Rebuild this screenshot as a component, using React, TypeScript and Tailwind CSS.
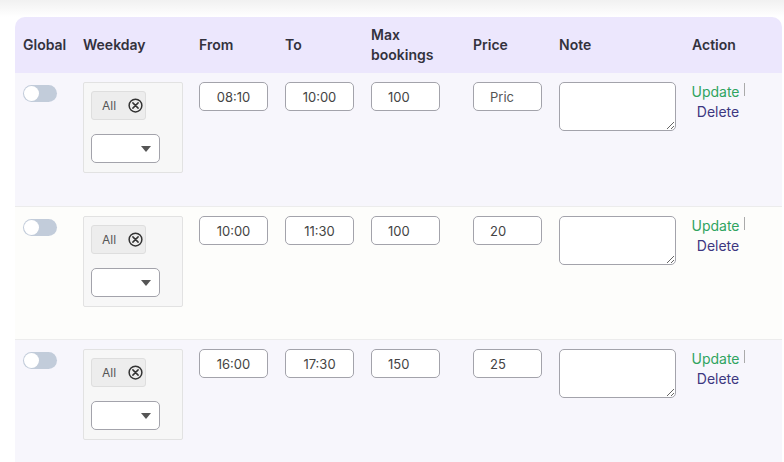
import React from 'react'

type Slot = {
  from: string
  to: string
  max: string
  price: string
}

const slots: Slot[] = [
  { from: '08:10', to: '10:00', max: '100', price: '' },
  { from: '10:00', to: '11:30', max: '100', price: '20' },
  { from: '16:00', to: '17:30', max: '150', price: '25' },
]

const cols = 'grid grid-cols-[60px_116px_86px_86px_102px_86px_133px_98px]'

function Toggle() {
  return (
    <div className="w-[34px] h-[17px] rounded-full bg-[#c2ccda] flex items-center px-[1px]">
      <div className="w-[15px] h-[15px] rounded-full bg-white" />
    </div>
  )
}

function CircleX() {
  return (
    <svg width="15" height="15" viewBox="0 0 16 16" fill="none" stroke="#333" strokeWidth="1.6">
      <circle cx="8" cy="8" r="6.8" />
      <path d="M5.2 5.2 L10.8 10.8 M10.8 5.2 L5.2 10.8" strokeLinecap="round" />
    </svg>
  )
}

function WeekdayPicker() {
  return (
    <div className="w-[100px] h-[91px] border border-[#e2e2e2] bg-[#f7f7f7] rounded-[2px] pt-[8px] pl-[7px]">
      <div className="w-[55px] h-[29px] bg-[#ededed] border border-[#dedede] rounded-[3px] flex items-center pl-[10px] gap-[12px]">
        <span className="text-[12px] text-[#555]">All</span>
        <CircleX />
      </div>
      <div className="mt-[14px] w-[69px] h-[29px] bg-white border border-[#a3a3ab] rounded-[5px] flex items-center justify-end pr-[8px]">
        <svg width="10" height="6" viewBox="0 0 10 6">
          <path d="M0 0 L10 0 L5 6 Z" fill="#555" />
        </svg>
      </div>
    </div>
  )
}

const inputCls =
  'w-[69px] h-[29px] bg-white border border-[#a3a3ab] rounded-[5px] text-[13px] text-[#444] outline-none'

export default function App() {
  return (
    <div className="w-[784px] h-[462px] overflow-hidden bg-white" style={{ fontFamily: 'Inter, "Noto Sans", sans-serif' }}>
      <div className="h-[17px] bg-gradient-to-b from-[#f1f1f1] to-white" />
      <div className="ml-[15px] w-[767px] rounded-t-[10px] overflow-hidden">
        <div className={`${cols} h-[56px] bg-[#ece7fd] items-center text-[14px] font-semibold text-[#33323d] leading-[20px]`}>
          <div className="pl-2">Global</div>
          <div className="pl-2">Weekday</div>
          <div className="pl-2">From</div>
          <div className="pl-2">To</div>
          <div className="pl-2">Max<br />bookings</div>
          <div className="pl-2">Price</div>
          <div className="pl-2">Note</div>
          <div className="pl-2">Action</div>
        </div>

        {slots.map((s, i) => (
          <div
            key={i}
            className={`${cols} h-[133px] pt-[9px] ${i > 0 ? 'border-t border-[#ececec]' : ''} ${i % 2 === 1 ? 'bg-[#fdfdfb]' : 'bg-[#f7f6fc]'}`}
          >
            <div className="pl-2 pt-[3px]">
              <Toggle />
            </div>
            <div className="pl-2">
              <WeekdayPicker />
            </div>
            <div className="pl-2">
              <input className={`${inputCls} text-center`} defaultValue={s.from} />
            </div>
            <div className="pl-2">
              <input className={`${inputCls} text-center`} defaultValue={s.to} />
            </div>
            <div className="pl-2">
              <input className={`${inputCls} pl-4`} defaultValue={s.max} />
            </div>
            <div className="pl-2">
              <input
                className={`${inputCls} pl-4 placeholder:text-[#555]`}
                defaultValue={s.price}
                placeholder="Pric"
              />
            </div>
            <div className="pl-2">
              <textarea className="block w-[117px] h-[49px] bg-white border border-[#a3a3ab] rounded-[5px] outline-none" />
            </div>
            <div className="pl-2">
              <div className="w-[52px] flex flex-col items-center text-[14px] leading-[20px]">
                <div className="flex items-start">
                  <span className="text-[#2fa45f]">Update</span>
                  <span className="ml-[4px] mt-[1px] w-px h-[13px] bg-[#aaa]" />
                </div>
                <span className="text-[#3d3780]">Delete</span>
              </div>
            </div>
          </div>
        ))}
      </div>
    </div>
  )
}
